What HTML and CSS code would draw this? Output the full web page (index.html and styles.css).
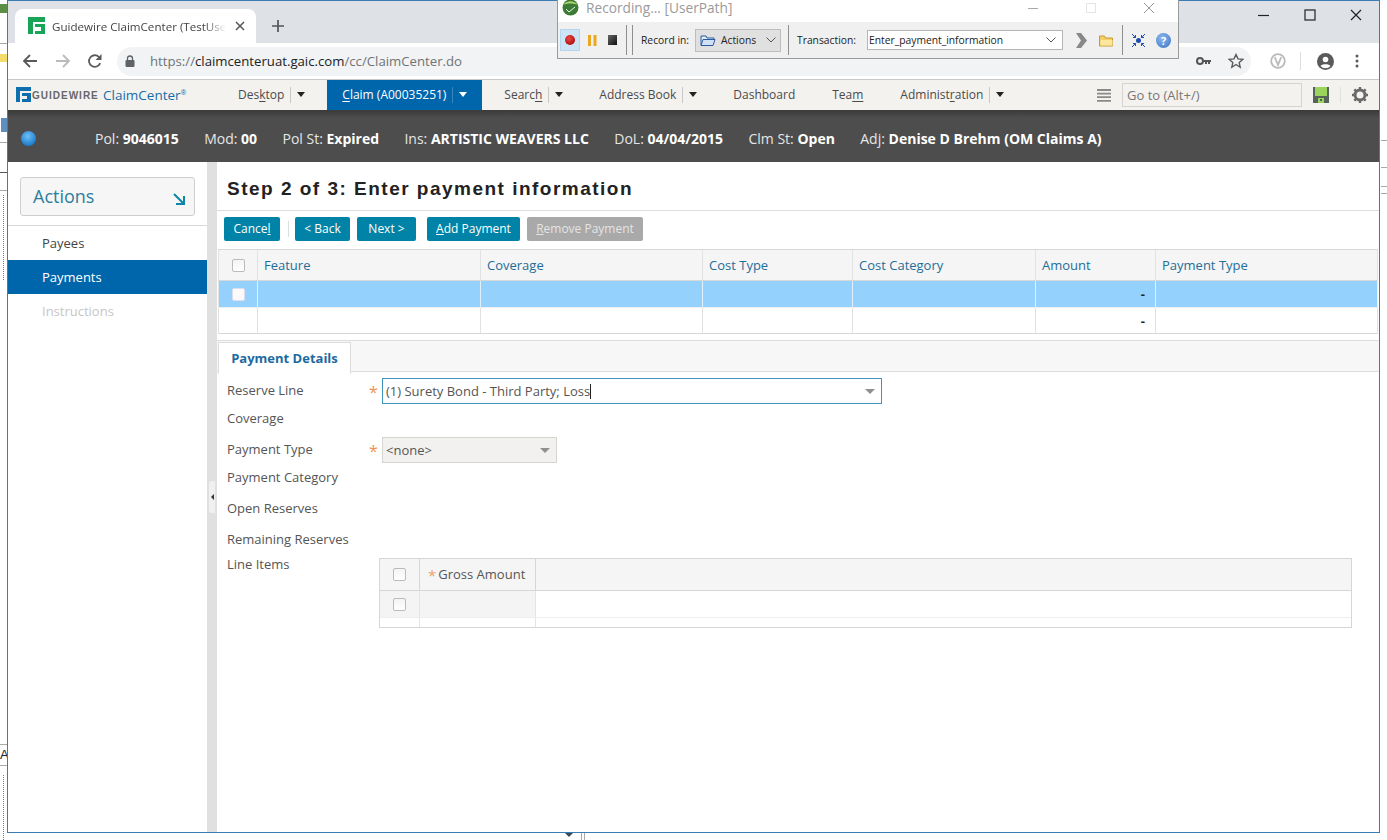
FILE: index.html
```html
<!DOCTYPE html>
<html lang="en">
<head>
<meta charset="utf-8">
<title>Guidewire ClaimCenter</title>
<link rel="stylesheet" href="styles.css">
</head>
<body>
<div class="desktop">
  <div class="bit bit-l0"></div><div class="bit bit-y"></div><div class="bit bit-p"></div>
  <div class="bit bit-l1"></div><div class="bit bit-l2"></div><div class="bit bit-l3"></div><div class="bit bit-l4"></div>
  <div class="bit bit-l5"></div><div class="bit bit-l6"></div><div class="bit bit-dots2"></div>
  <div class="bit bit-r1"></div><div class="bit bit-r2"></div><div class="bit bit-r3"></div><div class="bit bit-r4"></div>
  <div class="bit bit-b1"></div><div class="bit bit-b2"></div><div class="bit bit-dots"></div>
  <div class="bit bit-tri"></div>
  <span class="bit-a">A</span>

  <div class="browser">
    <div class="tabstrip">
      <div class="tab">
        <svg class="favicon" width="17" height="17" viewBox="0 0 17 17"><path d="M0 0h17v5H5v12H0z" fill="#18a558"/><path d="M7 7h10v10H7v-3h6v-4H7z" fill="#18a558"/></svg>
        <span class="tab-title">Guidewire ClaimCenter (TestUser</span>
        <svg class="tab-x" width="10" height="10" viewBox="0 0 10 10"><path d="M1 1l8 8M9 1l-8 8" stroke="#555" stroke-width="1.5"/></svg>
      </div>
      <svg class="plus" width="14" height="14" viewBox="0 0 14 14"><path d="M7 1v12M1 7h12" stroke="#555" stroke-width="1.7"/></svg>
      <div class="winctl">
        <svg width="14" height="14" viewBox="0 0 14 14"><path d="M1 7.500h11" stroke="#222" stroke-width="1.2"/></svg>
        <svg width="14" height="14" viewBox="0 0 14 14"><rect x="2" y="2" width="10" height="10" fill="none" stroke="#222" stroke-width="1.2"/></svg>
        <svg width="14" height="14" viewBox="0 0 14 14"><path d="M2 2l10 10M12 2L2 12" stroke="#222" stroke-width="1.2"/></svg>
      </div>
    </div>

    <div class="toolbar">
      <svg class="tb-ic" width="16" height="16" viewBox="0 0 16 16"><path d="M15 8H2M8 2L2 8l6 6" fill="none" stroke="#5a5a5a" stroke-width="1.8"/></svg>
      <svg class="tb-ic tb-fwd" width="16" height="16" viewBox="0 0 16 16"><path d="M1 8h13M8 2l6 6-6 6" fill="none" stroke="#bbb" stroke-width="1.8"/></svg>
      <svg class="tb-ic tb-rel" width="16" height="16" viewBox="0 0 16 16"><path d="M13.200 10.200A5.800 5.800 0 1 1 12 4" fill="none" stroke="#5a5a5a" stroke-width="1.8"/><path d="M14.500 1v6h-6z" fill="#5a5a5a"/></svg>
      <div class="omnibox">
        <svg width="10" height="12" viewBox="0 0 10 12"><path d="M2.500 5V3.500a2.500 2.500 0 0 1 5 0V5" fill="none" stroke="#5f6368" stroke-width="1.3"/><rect x="0.500" y="5" width="9" height="7" rx="1" fill="#5f6368"/></svg>
        <span class="url"><span class="url-dim">https://</span>claimcenteruat.gaic.com<span class="url-dim">/cc/ClaimCenter.do</span></span>
        <svg class="om-key" width="16" height="10" viewBox="0 0 16 10"><circle cx="4" cy="5" r="3" fill="none" stroke="#555" stroke-width="2"/><path d="M7 4h8v2h-1v2h-2V6h-1v2H9V6H7z" fill="#555"/></svg>
        <svg class="om-star" width="16" height="16" viewBox="0 0 16 16"><path d="M8 1.500l2 4.400 4.800.5-3.600 3.200 1 4.700L8 11.500l-4.200 2.800 1-4.700L1.200 6.400 6 5.900z" fill="none" stroke="#5a5a5a" stroke-width="1.4"/></svg>
      </div>
      <svg class="tb-v" width="16" height="16" viewBox="0 0 16 16"><circle cx="8" cy="8" r="6.800" fill="none" stroke="#bbb" stroke-width="1.8"/><path d="M4.800 4.200L8 12l3.200-7.800" fill="none" stroke="#bbb" stroke-width="1.8"/></svg>
      <i class="tb-sep"></i>
      <svg class="tb-user" width="17" height="17" viewBox="0 0 17 17"><circle cx="8.500" cy="8.500" r="8.500" fill="#5a5a5a"/><circle cx="8.500" cy="6.500" r="2.800" fill="#fff"/><path d="M3.500 13c1-2.500 9-2.500 10 0a6.500 6.500 0 0 1-10 0z" fill="#fff"/></svg>
      <svg class="tb-dots" width="4" height="14" viewBox="0 0 4 14"><circle cx="2" cy="2" r="1.500" fill="#5a5a5a"/><circle cx="2" cy="7" r="1.500" fill="#5a5a5a"/><circle cx="2" cy="12" r="1.500" fill="#5a5a5a"/></svg>
    </div>

    <header class="appnav">
      <svg class="logo" width="15" height="15" viewBox="0 0 15 15"><path d="M0 0h15v4H4v11H0z" fill="#0f6fae"/><path d="M6 6h9v9H6v-3h5V9H6z" fill="#0f6fae"/></svg>
      <span class="gw">GUIDEWIRE</span>
      <span class="cc">ClaimCenter<sup>®</sup></span>
      <nav class="navitems">
        <span class="ni ni-desktop">Des<u>k</u>top<i class="pipe"></i><b class="arrow"></b></span>
        <span class="ni ni-claim"><u>C</u>laim (A00035251)<i class="pipe pipe-claim"></i><b class="arrow arrow-w"></b></span>
        <span class="ni ni-search">Searc<u>h</u><i class="pipe"></i><b class="arrow"></b></span>
        <span class="ni ni-book">Address Book<i class="pipe"></i><b class="arrow"></b></span>
        <span class="ni ni-dash">Dashboard</span>
        <span class="ni ni-team">Tea<u>m</u></span>
        <span class="ni ni-admin">Administ<u>r</u>ation<i class="pipe"></i><b class="arrow"></b></span>
      </nav>
      <div class="nav-right">
        <svg width="14" height="13" viewBox="0 0 14 13"><path d="M0 1h14M0 4.600h14M0 8.200h14M0 11.800h14" stroke="#8a8a8a" stroke-width="1.8"/></svg>
        <div class="goto">Go to (Alt+/)</div>
        <svg class="save" width="16" height="16" viewBox="0 0 16 16"><rect width="16" height="16" fill="#56635a"/><rect x="2" y="0" width="12" height="9" fill="#9bd45c"/><rect x="5" y="11" width="6" height="5" fill="#9bd45c"/><rect x="7" y="12" width="2" height="2" fill="#56635a"/></svg>
        <i class="nr-sep"></i>
        <svg class="gear" width="16" height="16" viewBox="0 0 16 16"><circle cx="8" cy="8" r="5" fill="none" stroke="#6a6a6a" stroke-width="3"/><path d="M8 0v3M8 13v3M0 8h3M13 8h3M2.300 2.300l2.100 2.100M11.600 11.600l2.100 2.100M13.700 2.300l-2.100 2.100M4.400 11.600l-2.100 2.100" stroke="#6a6a6a" stroke-width="2.4"/></svg>
      </div>
    </header>

    <div class="infobar">
      <span class="ball"></span>
      <div class="infos">
        <span>Pol: <b>9046015</b></span>
        <span>Mod: <b>00</b></span>
        <span>Pol St: <b>Expired</b></span>
        <span>Ins: <b>ARTISTIC WEAVERS LLC</b></span>
        <span>DoL: <b>04/04/2015</b></span>
        <span>Clm St: <b>Open</b></span>
        <span>Adj: <b>Denise D Brehm (OM Claims A)</b></span>
      </div>
    </div>

    <div class="appbody">
      <aside class="sidebar">
        <div class="actions-wrap">
          <div class="actions"><span>Actions</span>
            <svg width="12" height="12" viewBox="0 0 12 12"><path d="M1 1l9 9M11 3v8H3" fill="none" stroke="#0b86a8" stroke-width="2"/></svg>
          </div>
        </div>
        <ul class="menu">
          <li>Payees</li>
          <li class="on">Payments</li>
          <li class="off">Instructions</li>
        </ul>
      </aside>
      <div class="splitter"><span class="grip"><b></b></span></div>
      <main class="main">
        <h1 class="title">Step 2 of 3: Enter payment information</h1>
        <div class="buttons">
          <span class="btn btn-c">Cance<u>l</u></span>
          <i class="btn-sep"></i>
          <span class="btn btn-b">&lt; Back</span>
          <span class="btn btn-n">Next &gt;</span>
          <span class="btn btn-add"><u>A</u>dd Payment</span>
          <span class="btn btn-dis"><u>R</u>emove Payment</span>
        </div>
        <div class="grid">
          <div class="g-row g-head">
            <div class="c c0"><i class="cb"></i></div><div class="c c1">Feature</div><div class="c c2">Coverage</div><div class="c c3">Cost Type</div><div class="c c4">Cost Category</div><div class="c c5">Amount</div><div class="c c6">Payment Type</div>
          </div>
          <div class="g-row g-sel">
            <div class="c c0"><i class="cb"></i></div><div class="c c1"></div><div class="c c2"></div><div class="c c3"></div><div class="c c4"></div><div class="c c5 num">-</div><div class="c c6"></div>
          </div>
          <div class="g-row">
            <div class="c c0"></div><div class="c c1"></div><div class="c c2"></div><div class="c c3"></div><div class="c c4"></div><div class="c c5 num">-</div><div class="c c6"></div>
          </div>
        </div>
        <div class="tabbar"><span class="dtab">Payment Details</span></div>
        <form class="form">
          <div class="row r28"><label>Reserve Line</label><span class="req">*</span>
            <div class="field f-active"><span>(1) Surety Bond - Third Party; Loss</span><i class="caret"></i><b class="tri"></b></div></div>
          <div class="row r31"><label>Coverage</label></div>
          <div class="row r28"><label>Payment Type</label><span class="req">*</span>
            <div class="field f-none"><span>&lt;none&gt;</span><b class="tri"></b></div></div>
          <div class="row r31"><label>Payment Category</label></div>
          <div class="row r31"><label>Open Reserves</label></div>
          <div class="row r25"><label>Remaining Reserves</label></div>
          <div class="row"><label>Line Items</label>
            <div class="items">
              <div class="it-row it-head"><div class="it0"><i class="cb"></i></div><div class="it1"><span class="req-s">*</span>Gross Amount</div></div>
              <div class="it-row it-body"><div class="it0 shade"><i class="cb"></i></div><div class="it1 shade"></div></div>
              <div class="it-row it-foot"><div class="it0"></div><div class="it1"></div></div>
            </div>
          </div>
        </form>
      </main>
    </div>
  </div>

  <div class="rec">
    <div class="rec-title">
      <svg width="17" height="17" viewBox="0 0 17 17"><circle cx="8.500" cy="8.500" r="8" fill="#3d7a35"/><path d="M1 6c4-5 11-5 15 0-4-2-11-2-15 0z" fill="#a9d46e"/><path d="M4 10l3 3 6-5" fill="none" stroke="#dfe" stroke-width="1"/></svg>
      <span class="rec-name">Recording... [UserPath]</span>
      <div class="rec-ctl">
        <svg width="12" height="12" viewBox="0 0 12 12"><path d="M1 6.500h10" stroke="#aaa"/></svg>
        <svg width="12" height="12" viewBox="0 0 12 12"><rect x="1.500" y="1.500" width="9" height="9" fill="none" stroke="#e4e4e4"/></svg>
        <svg width="12" height="12" viewBox="0 0 12 12"><path d="M1 1l10 10M11 1L1 11" stroke="#999"/></svg>
      </div>
    </div>
    <div class="rec-bar">
      <span class="rb-on"><i class="rdot"></i></span>
      <svg class="rb-pause" width="9" height="11" viewBox="0 0 9 11"><rect width="3" height="11" fill="#e8a820"/><rect x="5.500" width="3" height="11" fill="#e8a820"/></svg>
      <i class="rb-stop"></i>
      <i class="vs vs-a"></i><i class="vs vs-b"></i>
      <span class="rb-lab rb-rec">Record in:</span>
      <div class="rb-sel">
        <svg width="16" height="13" viewBox="0 0 16 13"><path d="M1 11V2h5l1 2h7v2" fill="#dfeafa" stroke="#2c5c9e"/><path d="M1 11.500l2-6h12l-2 6z" fill="#cfe0f7" stroke="#2c5c9e"/></svg>
        <span>Actions</span>
        <svg class="chev" width="10" height="6" viewBox="0 0 10 6"><path d="M.5.500L5 5 9.500.500" fill="none" stroke="#555"/></svg>
      </div>
      <i class="vs vs-c"></i>
      <span class="rb-lab rb-tr">Transaction:</span>
      <div class="rb-input"><span>Enter_payment_information</span>
        <svg width="10" height="6" viewBox="0 0 10 6"><path d="M.5.500L5 5 9.500.500" fill="none" stroke="#555"/></svg>
      </div>
      <svg class="rb-go" width="11" height="15" viewBox="0 0 11 15"><path d="M0 0h5l6 7.500L5 15H0l5-7.500z" fill="#888"/></svg>
      <svg class="rb-folder" width="15" height="13" viewBox="0 0 15 13"><path d="M.5 12V2h5l1 2h7v8z" fill="#f4cf6a" stroke="#c79a2c"/><path d="M1.500 6h12v5.500h-12z" fill="#fbe79f"/></svg>
      <i class="vs vs-d"></i>
      <svg class="rb-net" width="15" height="15" viewBox="0 0 15 15"><circle cx="7.500" cy="7.500" r="2.500" fill="#1c4fb0"/><path d="M1 1l3.500 3.500M14 1l-3.500 3.500M1 14l3.500-3.500M14 14l-3.500-3.500M4.500 2v2.500H2M10.500 2v2.500H13M4.500 13v-2.500H2M10.500 13v-2.500H13" fill="none" stroke="#1c4fb0"/></svg>
      <span class="rb-help">?</span>
    </div>
  </div>
</div>
</body>
</html>
```
FILE: styles.css
```css
* { box-sizing: border-box; }
html, body { margin: 0; padding: 0; }
body { width: 1387px; height: 840px; overflow: hidden; background: #fff; font-family: "Open Sans", sans-serif; }
ul { margin: 0; padding: 0; list-style: none; }
i, b { display: block; }
svg { display: block; flex: none; }

.desktop { position: relative; width: 1387px; height: 840px; background: #fff; overflow: hidden; }
.bit { position: absolute; background: #aaa; }
.bit-l0 { left: 0; top: 4px; width: 7px; height: 9px; background: #5c8f45; }
.bit-y { left: 0; top: 54px; width: 7px; height: 8px; background: #f2dc6a; }
.bit-p { left: 1px; top: 118px; width: 6px; height: 14px; background: #5f8fc0; }
.bit-l1 { left: 0; top: 43px; width: 7px; height: 1px; }
.bit-l2 { left: 0; top: 142px; width: 7px; height: 1px; }
.bit-l3 { left: 0; top: 744px; width: 7px; height: 1px; }
.bit-l4 { left: 0; top: 765px; width: 7px; height: 1px; }
.bit-l5 { left: 0; top: 172px; width: 7px; height: 1px; background: #555; }
.bit-l6 { left: 0; top: 190px; width: 7px; height: 1px; }
.bit-dots2 { left: 3px; top: 195px; width: 0; height: 85px; border-left: 1px dotted #a06a40; background: none; }
.bit-r1 { left: 1381px; top: 140px; width: 6px; height: 1px; }
.bit-r2 { left: 1381px; top: 167px; width: 6px; height: 1px; }
.bit-r3 { left: 1381px; top: 186px; width: 6px; height: 1px; }
.bit-r4 { left: 1381px; top: 193px; width: 6px; height: 1px; }
.bit-b1 { left: 581px; top: 832px; width: 1px; height: 8px; }
.bit-b2 { left: 584px; top: 832px; width: 1px; height: 8px; }
.bit-dots { left: 3px; top: 775px; width: 0; height: 65px; border-left: 1px dotted #a06a40; background: none; }
.bit-tri { left: 565px; top: 833px; width: 0; height: 0; border: 4px solid transparent; border-top: 4px solid #3a4a5a; border-bottom: 0; background: none; }
.bit-a { position: absolute; left: 0; top: 747px; font: 13px "Liberation Sans", sans-serif; color: #222; }

.browser { position: absolute; left: 7px; top: 0; width: 1373px; height: 833px; border: 1px solid #3a7db5; background: #fff; display: flex; flex-direction: column; }

.tabstrip { height: 42px; background: #dee1e6; display: flex; align-items: flex-end; flex: none; padding-left: 7px; position: relative; }
.tab { width: 241px; height: 34px; background: #fff; border-radius: 8px 8px 0 0; display: flex; align-items: center; padding-left: 13px; }
.favicon { margin-top: -1px; }
.tab-title { width: 174px; margin-left: 7px; font: 11.600px "Open Sans", sans-serif; color: #444; white-space: nowrap; -webkit-mask-image: linear-gradient(90deg, #000 88%, transparent); mask-image: linear-gradient(90deg, #000 88%, transparent); }
.tab-x { margin-left: 9px; }
.plus { margin: 0 0 10px 15px; }
.winctl { position: absolute; top: 7px; right: 16px; display: flex; gap: 32px; }

.toolbar { height: 37px; background: #fff; border-bottom: 1px solid #c9c9c9; display: flex; align-items: center; flex: none; padding-left: 14px; }
.tb-fwd { margin-left: 17px; }
.tb-rel { margin-left: 16px; }
.omnibox { width: 1134px; height: 29px; margin-left: 14px; border-radius: 15px; background: #f1f3f4; display: flex; align-items: center; padding-left: 8px; }
.url { margin-left: 15px; font: 13.200px "Open Sans", sans-serif; color: #222; white-space: nowrap; }
.url-dim { color: #6f7377; }
.om-key { margin-left: 734px; }
.om-star { margin-left: 16px; }
.tb-v { margin-left: 19px; }
.tb-sep { width: 1px; height: 18px; background: #ddd; margin-left: 14px; }
.tb-user { margin-left: 16px; }
.tb-dots { margin-left: 21px; }

.appnav { height: 30px; background: #f4f2ef; display: flex; align-items: center; flex: none; padding-left: 8px; position: relative; }
.logo { margin-top: -1px; }
.gw { margin-left: 1px; font: bold 10px "Liberation Sans", sans-serif; letter-spacing: 1px; color: #676767; width: 71px; }
.cc { font-size: 13.500px; color: #146ea8; white-space: nowrap; width: 88px; }
.cc sup { font-size: 7px; line-height: 0; }
.navitems { display: flex; align-items: stretch; height: 30px; font-size: 12px; color: #4a4a4a; margin-left: 47px; }
.ni { display: flex; align-items: center; white-space: nowrap; padding-bottom: 1px; }
.ni u { text-underline-offset: 2px; }
.ni-claim { width: 155px; margin-left: 22px; padding-left: 15px; background: #0066ac; color: #fff; }
.ni-search { margin-left: 22px; }
.ni-book { margin-left: 36px; }
.ni-dash { margin-left: 36px; }
.ni-team { margin-left: 37px; }
.ni-admin { margin-left: 37px; }
.pipe { width: 1px; height: 16px; background: #c8c8c8; margin: 0 3px 0 6px; }
.pipe-claim { background: #3a86bd; }
.arrow { width: 0; height: 0; border: 4px solid transparent; border-top: 5px solid #222; border-bottom: 0; margin-left: 3px; }
.arrow-w { border-top-color: #fff; }
.nav-right { position: absolute; left: 1089px; top: 0; height: 30px; display: flex; align-items: center; }
.goto { width: 180px; height: 24px; margin-left: 11px; border: 1px solid #d6d4d0; padding-left: 4px; font-size: 13px; line-height: 22px; color: #777; background: #f4f2ef; }
.save { margin-left: 11px; }
.nr-sep { width: 1px; height: 16px; background: #e2e0dc; margin-left: 11px; }
.gear { margin-left: 11px; }

.infobar { height: 52px; flex: none; background: linear-gradient(#3a3a3a, #4d4d4d 8px); display: flex; align-items: center; padding: 4px 0 0 13px; color: #e6e6e6; }
.ball { width: 15px; height: 15px; border-radius: 50%; background: radial-gradient(circle at 45% 35%, #6fc0f5, #1f7fd0 70%); }
.infos { display: flex; gap: 25.400px; margin-left: 59px; font-size: 14px; white-space: nowrap; }
.infos b { display: inline; color: #fff; font-weight: 700; }

.appbody { flex: 1; display: flex; min-height: 0; }
.sidebar { width: 199px; flex: none; background: #fff; }
.actions-wrap { height: 64px; padding: 15px 12px 0; border-bottom: 1px solid #d8d8d8; }
.actions { height: 39px; border: 1px solid #cfcfcf; border-radius: 3px; background: #f6f6f6; display: flex; align-items: center; justify-content: space-between; padding: 0 9px 2px 12px; font-size: 18px; color: #2a7f9c; }
.actions svg { margin-top: 6px; }
.menu { font-size: 13px; color: #444; }
.menu li { height: 34px; line-height: 34px; padding-left: 34px; }
.menu .on { background: #0066ac; color: #fff; }
.menu .off { color: #c6c6c6; }
.splitter { width: 10px; flex: none; background: #e0e0e0; position: relative; }
.grip { position: absolute; left: 2px; top: 319px; width: 6px; height: 32px; background: #f0f0f0; border-radius: 3px 0 0 3px; display: flex; align-items: center; justify-content: center; }
.grip b { width: 0; height: 0; border: 3px solid transparent; border-right: 3px solid #333; border-left: 0; }

.main { flex: 1; min-width: 0; background: #fff; color: #444; }
.title { margin: 0; height: 49px; padding: 15px 0 0 10px; border-bottom: 1px solid #ddd; font: bold 19px/24px "Liberation Sans", sans-serif; letter-spacing: 1.490px; color: #222; }
.buttons { display: flex; align-items: center; height: 38px; padding: 0 0 3px 7px; }
.btn { height: 24px; line-height: 24px; text-align: center; border-radius: 2px; background: #0083a6; color: #fff; font-size: 12px; white-space: nowrap; margin-right: 7px; flex: none; }
.btn-c { width: 56px; margin-right: 8px; }
.btn-b { width: 55px; }
.btn-n { width: 59px; margin-right: 11px; }
.btn-add { width: 93px; }
.btn-dis { width: 116px; background: #a9a9a9; color: #e4e4e4; }
.btn-sep { width: 1px; height: 16px; background: #ddd; margin-right: 6px; }

.grid { margin-left: 1px; width: 1160px; border: 1px solid #d8d8d8; border-width: 1px 0 1px 0; }
.g-row { display: flex; height: 26px; }
.g-head { height: 31px; background: #f5f5f5; border-bottom: 1px solid #d8d8d8; font-size: 13px; color: #1f6e98; }
.g-sel { background: #94d2fd; }
.c { border-right: 1px solid #e2e2e2; padding-left: 6px; line-height: 30px; }
.g-sel .c { border-right-color: #e0f0ff; }
.g-row:not(.g-head):not(.g-sel) { border-top: 1px solid #eee; }
.c0 { width: 40px; padding: 0; display: flex; align-items: center; justify-content: center; border-left: 1px solid #e2e2e2; }
.c1 { width: 223px; }
.c2 { width: 222px; }
.c3 { width: 150px; }
.c4 { width: 183px; }
.c5 { width: 120px; }
.c6 { width: 222px; }
.num { text-align: right; padding: 0 10px 0 0; font-size: 13px; font-weight: 700; line-height: 26px; color: #222; }
.cb { width: 13px; height: 13px; border: 1px solid #bbb; border-radius: 2px; background: linear-gradient(#f4f4f4, #fff); }
.g-sel .cb { border-color: #dde; background: #fafafa; }

.tabbar { margin-top: 6px; height: 32px; background: #f7f7f7; border-top: 1px solid #ddd; border-bottom: 1px solid #ddd; display: flex; padding-left: 1px; }
.dtab { width: 133px; height: 32px; margin-top: 1px; background: #fff; border: 1px solid #ddd; border-bottom: 0; text-align: center; font-size: 13px; font-weight: 700; line-height: 31px; color: #1d6aa0; }
.form { padding: 8px 0 0 10px; font-size: 13px; color: #555; }
.row { display: flex; align-items: flex-start; line-height: 20px; }
.r28 { height: 28px; }
.r31 { height: 31px; }
.r25 { height: 25px; }
.row label { width: 142px; flex: none; }
.req { color: #f0924f; font-size: 16px; width: 13px; flex: none; line-height: 24px; }
.field { height: 26px; margin-top: -2px; display: flex; align-items: center; padding-left: 3px; position: relative; }
.f-active { width: 500px; border: 1px solid #3d94bd; background: #fff; }
.f-none { width: 175px; border: 1px solid #d6d4d0; background: #f2f1ef; }
.caret { width: 1px; height: 15px; background: #222; }
.tri { position: absolute; right: 6px; top: 10px; width: 0; height: 0; border: 5px solid transparent; border-top: 5px solid #8f8f8f; border-bottom: 0; }
.items { width: 973px; margin: 4px 0 0 10px; border: 1px solid #d6d6d6; }
.it-row { display: flex; }
.it0 { width: 40px; display: flex; align-items: center; justify-content: center; border-right: 1px solid #e4e4e4; flex: none; }
.it1 { width: 116px; border-right: 1px solid #e4e4e4; flex: none; padding-left: 8px; }
.it-head { height: 32px; background: #f5f5f5; border-bottom: 1px solid #d6d6d6; line-height: 30px; }
.it-head .it0, .it-head .it1 { border-right-color: #d6d6d6; }
.it-body { height: 27px; border-bottom: 1px solid #eee; }
.it-foot { height: 9px; }
.shade { background: #f4f4f4; }
.req-s { color: #f0a070; margin-right: 2px; font-size: 15px; vertical-align: -2px; }

.rec { position: absolute; left: 557px; top: -1px; width: 622px; height: 60px; border: 1px solid #9a9a9a; border-top: 0; background: #f0f0f0; display: flex; flex-direction: column; }
.rec-title { height: 23px; background: #fff; display: flex; align-items: center; padding: 0 0 6px 4px; position: relative; flex: none; }
.rec-name { margin-left: 7px; font-size: 13.700px; line-height: 16px; color: #9a9a9a; }
.rec-ctl { margin-left: auto; margin-right: 23px; display: flex; gap: 46px; }
.rec-bar { flex: 1; display: flex; align-items: center; font: 10.300px "Open Sans", sans-serif; color: #222; }
.rb-on { width: 20px; height: 22px; margin-left: 2px; background: #cde4f7; border: 1px solid #b6d6ef; display: flex; align-items: center; justify-content: center; flex: none; }
.rdot { width: 10px; height: 10px; border-radius: 50%; background: radial-gradient(circle at 40% 35%, #e44, #900); }
.rb-pause { margin-left: 8px; }
.rb-stop { width: 9px; height: 10px; margin-left: 11px; background: linear-gradient(135deg, #666, #111); flex: none; }
.vs { width: 1px; height: 30px; background: #8f8f8f; flex: none; }
.vs-a { margin-left: 9px; }
.vs-b { margin-left: 5px; }
.rb-rec { margin-left: 8px; width: 48px; white-space: nowrap; }
.rb-sel { width: 86px; height: 23px; margin-left: 6px; background: #e0e0e0; border: 1px solid #bdbdbd; display: flex; align-items: center; padding-left: 4px; gap: 5px; flex: none; }
.chev { margin-left: 5px; }
.vs-c { margin-left: 7px; }
.rb-tr { margin-left: 8px; width: 59px; white-space: nowrap; }
.rb-input { width: 196px; height: 20px; margin-left: 11px; background: #fff; border: 1px solid #b5b5b5; display: flex; align-items: center; justify-content: space-between; padding: 0 6px 0 1px; flex: none; }
.rb-go { margin-left: 13px; }
.rb-folder { margin-left: 12px; }
.vs-d { margin-left: 8px; }
.rb-net { margin-left: 8px; }
.rb-help { width: 15px; height: 15px; margin-left: 10px; border-radius: 50%; background: radial-gradient(circle at 40% 35%, #8ab8ee, #3a72c4); color: #fff; font-weight: 700; font-size: 11px; line-height: 15px; text-align: center; flex: none; }
```
